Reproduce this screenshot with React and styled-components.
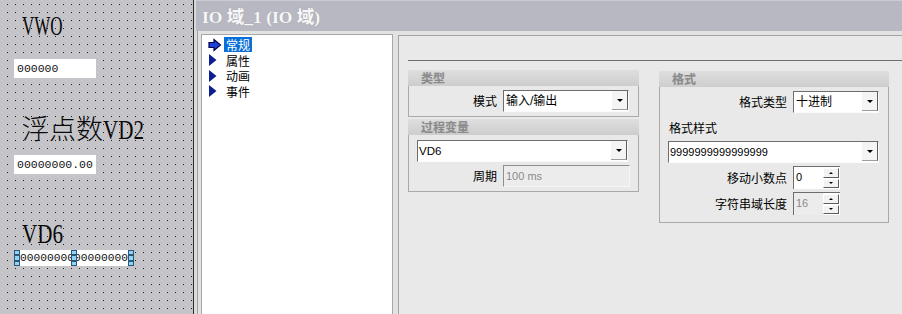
import React from "react";
import styled, { createGlobalStyle } from "styled-components";

const GlobalStyle = createGlobalStyle`
  html, body {
    margin: 0;
    padding: 0;
    background: #e9e9e9;
  }
  body {
    font-family: "Noto Sans CJK SC", "Liberation Sans", sans-serif;
  }
`;

const Screen = styled.div`
  display: flex;
  width: 902px;
  height: 314px;
  overflow: hidden;
`;

/* ---------- HMI canvas on the left ---------- */

const Canvas = styled.div`
  width: 194px;
  flex-shrink: 0;
  box-sizing: border-box;
  display: flex;
  flex-direction: column;
  align-items: flex-start;
  padding-left: 14px;
  background-color: #c5c4c9;
  background-image: linear-gradient(to right, #c5c4c9 7px, transparent 7px),
    linear-gradient(to bottom, #c5c4c9 7px, #1c1c1c 7px);
  background-size: 8px 8px;
  background-position: 0 5px;
  border-right: 1px solid #2e2e2e;
`;

const Caption = styled.div`
  margin-top: ${(p) => p.$top}px;
  margin-left: 8px;
  height: 26px;
  line-height: 26px;
  font-family: "Liberation Serif", "Noto Sans CJK SC", serif;
  font-size: 27px;
  font-weight: 300;
  color: #0a0a0a;
  white-space: nowrap;
`;

const Narrow = styled.span`
  display: inline-block;
  transform: scaleX(${(p) => p.$squeeze});
  transform-origin: left center;
`;

const ValueBox = styled.div`
  margin-top: ${(p) => p.$top}px;
  width: 82px;
  height: 19px;
  box-sizing: border-box;
  padding-left: 3px;
  background: #fff;
  font-family: "Liberation Mono", monospace;
  font-size: 11.5px;
  line-height: 19px;
  color: #111;
`;

const SelectedBox = styled.div`
  position: relative;
  margin-top: 3px;
  width: 120px;
  height: 16px;
  box-sizing: border-box;
  padding-left: 6px;
  background: #fff;
  font-family: "Liberation Mono", monospace;
  font-size: 11.25px;
  line-height: 16px;
  color: #111;
  white-space: nowrap;
`;

const Handle = styled.div`
  position: absolute;
  top: 0;
  left: ${(p) => p.$left}px;
  display: flex;
  flex-direction: column;
`;

const HandleCell = styled.div`
  width: 6px;
  height: 5.4px;
  box-sizing: border-box;
  border: 1px solid #2b5878;
  background: #8fd3f7;
`;

const Gutter = styled.div`
  width: 2px;
  flex-shrink: 0;
  background: #d9d9d9;
`;

/* ---------- properties dialog ---------- */

const Dialog = styled.div`
  flex: 1;
  display: flex;
  flex-direction: column;
  background: #e2e2e2;
`;

const TitleBar = styled.div`
  height: 31px;
  box-sizing: border-box;
  padding: 3px 0 0 6px;
  border-top: 1px solid #cbcbd3;
  background: #b8b8c2;
  font-family: "Liberation Serif", "Noto Sans CJK SC", serif;
  font-weight: bold;
  font-size: 17.5px;
  line-height: 27px;
  color: #f7f7f7;
  text-shadow: 0 0 1px #9a9aa6;
  white-space: nowrap;
`;

const Body = styled.div`
  flex: 1;
  display: flex;
  padding-top: 3px;
  border-left: 1px solid #9c9c9c;
  margin-left: 1px;
`;

const TreePanel = styled.div`
  width: 192px;
  margin-left: 3px;
  flex-shrink: 0;
  box-sizing: border-box;
  background: #fff;
  border: 1px solid #a8a8a8;
  border-bottom: none;
`;

const TreeList = styled.ul`
  list-style: none;
  margin: 0;
  padding: 2px 0 0 6px;
`;

const TreeItem = styled.li`
  display: flex;
  align-items: center;
  height: 15.5px;
`;

const TreeIcon = styled.span`
  width: 14px;
  height: 14px;
  display: flex;
  align-items: center;
`;

const TreeLabel = styled.span`
  margin-left: 2px;
  padding: 0 2px;
  height: 15px;
  line-height: 15px;
  font-size: 12px;
  color: ${(p) => (p.$active ? "#fff" : "#000")};
  background: ${(p) => (p.$active ? "#0a6fd6" : "transparent")};
`;

const PropPanel = styled.div`
  flex: 1;
  margin: 1px 0 0 5px;
  padding-top: 24px;
  background: #e9e9e9;
  border-left: 1px solid #a4a4a4;
  border-top: 1px solid #a4a4a4;
`;

const Rule = styled.div`
  margin-left: 9px;
  height: 1px;
  background: #6f6f6f;
`;

const Columns = styled.div`
  display: flex;
  align-items: flex-start;
  gap: 20px;
  margin: 9px 0 0 9px;
`;

const Column = styled.div`
  display: flex;
  flex-direction: column;
  gap: 2px;
  margin-top: ${(p) => p.$top || 0}px;
`;

const Group = styled.div`
  width: ${(p) => p.$w}px;
  box-sizing: border-box;
  border: 1px solid #a9a9a9;
  border-top: none;
`;

const GroupHead = styled.div`
  height: 16px;
  margin: 0 -1px;
  padding-left: 13px;
  background: linear-gradient(to bottom, #dedede, #cdcdcd);
  font-size: 12px;
  font-weight: bold;
  line-height: 16px;
  color: #8b8b8b;
  text-shadow: 0 0 1px #bdbdbd;
`;

const GroupBody = styled.div`
  display: flex;
  flex-direction: column;
  gap: 3px;
  padding: ${(p) => p.$pad};
`;

const Row = styled.div`
  display: flex;
  align-items: center;
  gap: 6px;
  margin-top: ${(p) => p.$top || 0}px;
  margin-left: ${(p) => p.$indent || 0}px;
`;

const Label = styled.div`
  width: ${(p) => (p.$w ? `${p.$w}px` : "auto")};
  text-align: right;
  font-size: 12px;
  line-height: 16px;
  color: #000;
  white-space: nowrap;
`;

const Combo = styled.div`
  display: flex;
  width: ${(p) => p.$w}px;
  height: 22px;
  box-sizing: border-box;
  background: #fff;
  border-top: 1px solid #6d6d6d;
  border-left: 1px solid #6d6d6d;
  border-right: 1px solid #fbfbfb;
  border-bottom: 1px solid #fbfbfb;
`;

const FieldText = styled.div`
  flex: 1;
  padding-left: ${(p) => p.$pad || 2}px;
  font-family: "Liberation Sans", "Noto Sans CJK SC", sans-serif;
  font-size: ${(p) => p.$size || 12}px;
  line-height: 20px;
  color: ${(p) => (p.$muted ? "#8a8a8a" : "#000")};
  white-space: nowrap;
  overflow: hidden;
`;

const DropButton = styled.div`
  width: 15px;
  margin-bottom: 1px;
  display: flex;
  align-items: center;
  justify-content: center;
  background: #f4f4f4;
  border-right: 1px solid #5c5c5c;
  border-bottom: 1px solid #9d9d9d;
`;

const Arrow = styled.span`
  width: 0;
  height: 0;
  border-left: ${(p) => p.$s}px solid transparent;
  border-right: ${(p) => p.$s}px solid transparent;
  ${(p) => (p.$up ? "border-bottom" : "border-top")}: ${(p) => p.$s}px solid #000;
`;

const Field = styled.div`
  display: flex;
  width: ${(p) => p.$w}px;
  height: 22px;
  box-sizing: border-box;
  background: ${(p) => (p.$disabled ? "#ececec" : "#fff")};
  border-top: 1px solid #8e8e8e;
  border-left: 1px solid #8e8e8e;
  border-right: 1px solid #f6f6f6;
  border-bottom: 1px solid #f6f6f6;
`;

const SpinBox = styled.div`
  display: flex;
  width: 47px;
  height: 23px;
  box-sizing: border-box;
  padding-right: 1px;
  background: #fff;
  border-left: 1px solid #6d6d6d;
  border-top: 1px solid #6d6d6d;
`;

const SpinValue = styled.div`
  flex: 1;
  padding-left: 2px;
  background: ${(p) => (p.$disabled ? "#ececec" : "#fff")};
  font-family: "Liberation Sans", sans-serif;
  font-size: 11px;
  line-height: 20px;
  color: ${(p) => (p.$disabled ? "#8a8a8a" : "#000")};
`;

const SpinButtons = styled.div`
  width: 16px;
  display: flex;
  flex-direction: column;
  gap: 1px;
  padding: 1px 0;
`;

const SpinButton = styled.div`
  flex: 1;
  display: flex;
  align-items: center;
  justify-content: center;
  background: #f2f2f2;
  border-right: 1px solid #5c5c5c;
  border-bottom: 1px solid #5c5c5c;
  border-top: 1px solid #fff;
  border-left: 1px solid #fff;
`;

const SelectedArrow = () => (
  <svg width="14" height="14" viewBox="0 0 14 14">
    <path d="M1 4.5H6V1.5L12.5 7L6 12.5V9.5H1Z" fill="#1f43d6" stroke="#000050" strokeWidth="1.2" />
  </svg>
);

const PlainArrow = () => (
  <svg width="10" height="14" viewBox="0 0 10 14">
    <path d="M1 1L8.5 7L1 13Z" fill="#0f1d93" />
  </svg>
);

const ComboBox = ({ w, children, size, pad }) => (
  <Combo $w={w}>
    <FieldText $size={size} $pad={pad}>{children}</FieldText>
    <DropButton>
      <Arrow $s={3.5} />
    </DropButton>
  </Combo>
);

const Spinner = ({ value, disabled }) => (
  <SpinBox>
    <SpinValue $disabled={disabled}>{value}</SpinValue>
    <SpinButtons>
      <SpinButton>
        <Arrow $s={2} $up />
      </SpinButton>
      <SpinButton>
        <Arrow $s={2} />
      </SpinButton>
    </SpinButtons>
  </SpinBox>
);

const tree = [
  { label: "常规", active: true },
  { label: "属性" },
  { label: "动画" },
  { label: "事件" },
];

const App = () => {
  return (
    <>
      <GlobalStyle />
      <Screen>
        <Canvas>
          <Caption $top={13}>
            <Narrow $squeeze={0.63}>VWO</Narrow>
          </Caption>
          <ValueBox $top={20}>000000</ValueBox>
          <Caption $top={39}>
            浮点数<Narrow $squeeze={0.78}>VD2</Narrow>
          </Caption>
          <ValueBox $top={12}>00000000.00</ValueBox>
          <Caption $top={47}>
            <Narrow $squeeze={0.78}>VD6</Narrow>
          </Caption>
          <SelectedBox>
            0000000000000000
            {[0, 57, 114].map((left) => (
              <Handle key={left} $left={left}>
                <HandleCell />
                <HandleCell />
                <HandleCell />
              </Handle>
            ))}
          </SelectedBox>
        </Canvas>
        <Gutter />
        <Dialog>
          <TitleBar>IO 域_1 (IO 域)</TitleBar>
          <Body>
            <TreePanel>
              <TreeList>
                {tree.map((item) => (
                  <TreeItem key={item.label}>
                    <TreeIcon>{item.active ? <SelectedArrow /> : <PlainArrow />}</TreeIcon>
                    <TreeLabel $active={item.active}>{item.label}</TreeLabel>
                  </TreeItem>
                ))}
              </TreeList>
            </TreePanel>
            <PropPanel>
              <Rule />
              <Columns>
                <Column>
                  <Group $w={231}>
                    <GroupHead>类型</GroupHead>
                    <GroupBody $pad="4px 0 4px 0">
                      <Row>
                        <Label $w={88}>模式</Label>
                        <ComboBox w={126}>输入/输出</ComboBox>
                      </Row>
                    </GroupBody>
                  </Group>
                  <Group $w={231}>
                    <GroupHead>过程变量</GroupHead>
                    <GroupBody $pad="5px 0 4px 0">
                      <Row $indent={8}>
                        <ComboBox w={211} size={11.5} pad={1}>
                          VD6
                        </ComboBox>
                      </Row>
                      <Row>
                        <Label $w={88}>周期</Label>
                        <Field $w={127} $disabled>
                          <FieldText $muted $size={11}>
                            100 ms
                          </FieldText>
                        </Field>
                      </Row>
                    </GroupBody>
                  </Group>
                </Column>
                <Column $top={1}>
                  <Group $w={230}>
                    <GroupHead>格式</GroupHead>
                    <GroupBody $pad="4px 0 7px 0">
                      <Row>
                        <Label $w={127}>格式类型</Label>
                        <ComboBox w={86}>十进制</ComboBox>
                      </Row>
                      <Row $top={4} $indent={9}>
                        <Label>格式样式</Label>
                      </Row>
                      <Row $top={2} $indent={8}>
                        <ComboBox w={211} size={11} pad={1}>
                          9999999999999999
                        </ComboBox>
                      </Row>
                      <Row>
                        <Label $w={127}>移动小数点</Label>
                        <Spinner value="0" />
                      </Row>
                      <Row>
                        <Label $w={127}>字符串域长度</Label>
                        <Spinner value="16" disabled />
                      </Row>
                    </GroupBody>
                  </Group>
                </Column>
              </Columns>
            </PropPanel>
          </Body>
        </Dialog>
      </Screen>
    </>
  );
};

export default App;
